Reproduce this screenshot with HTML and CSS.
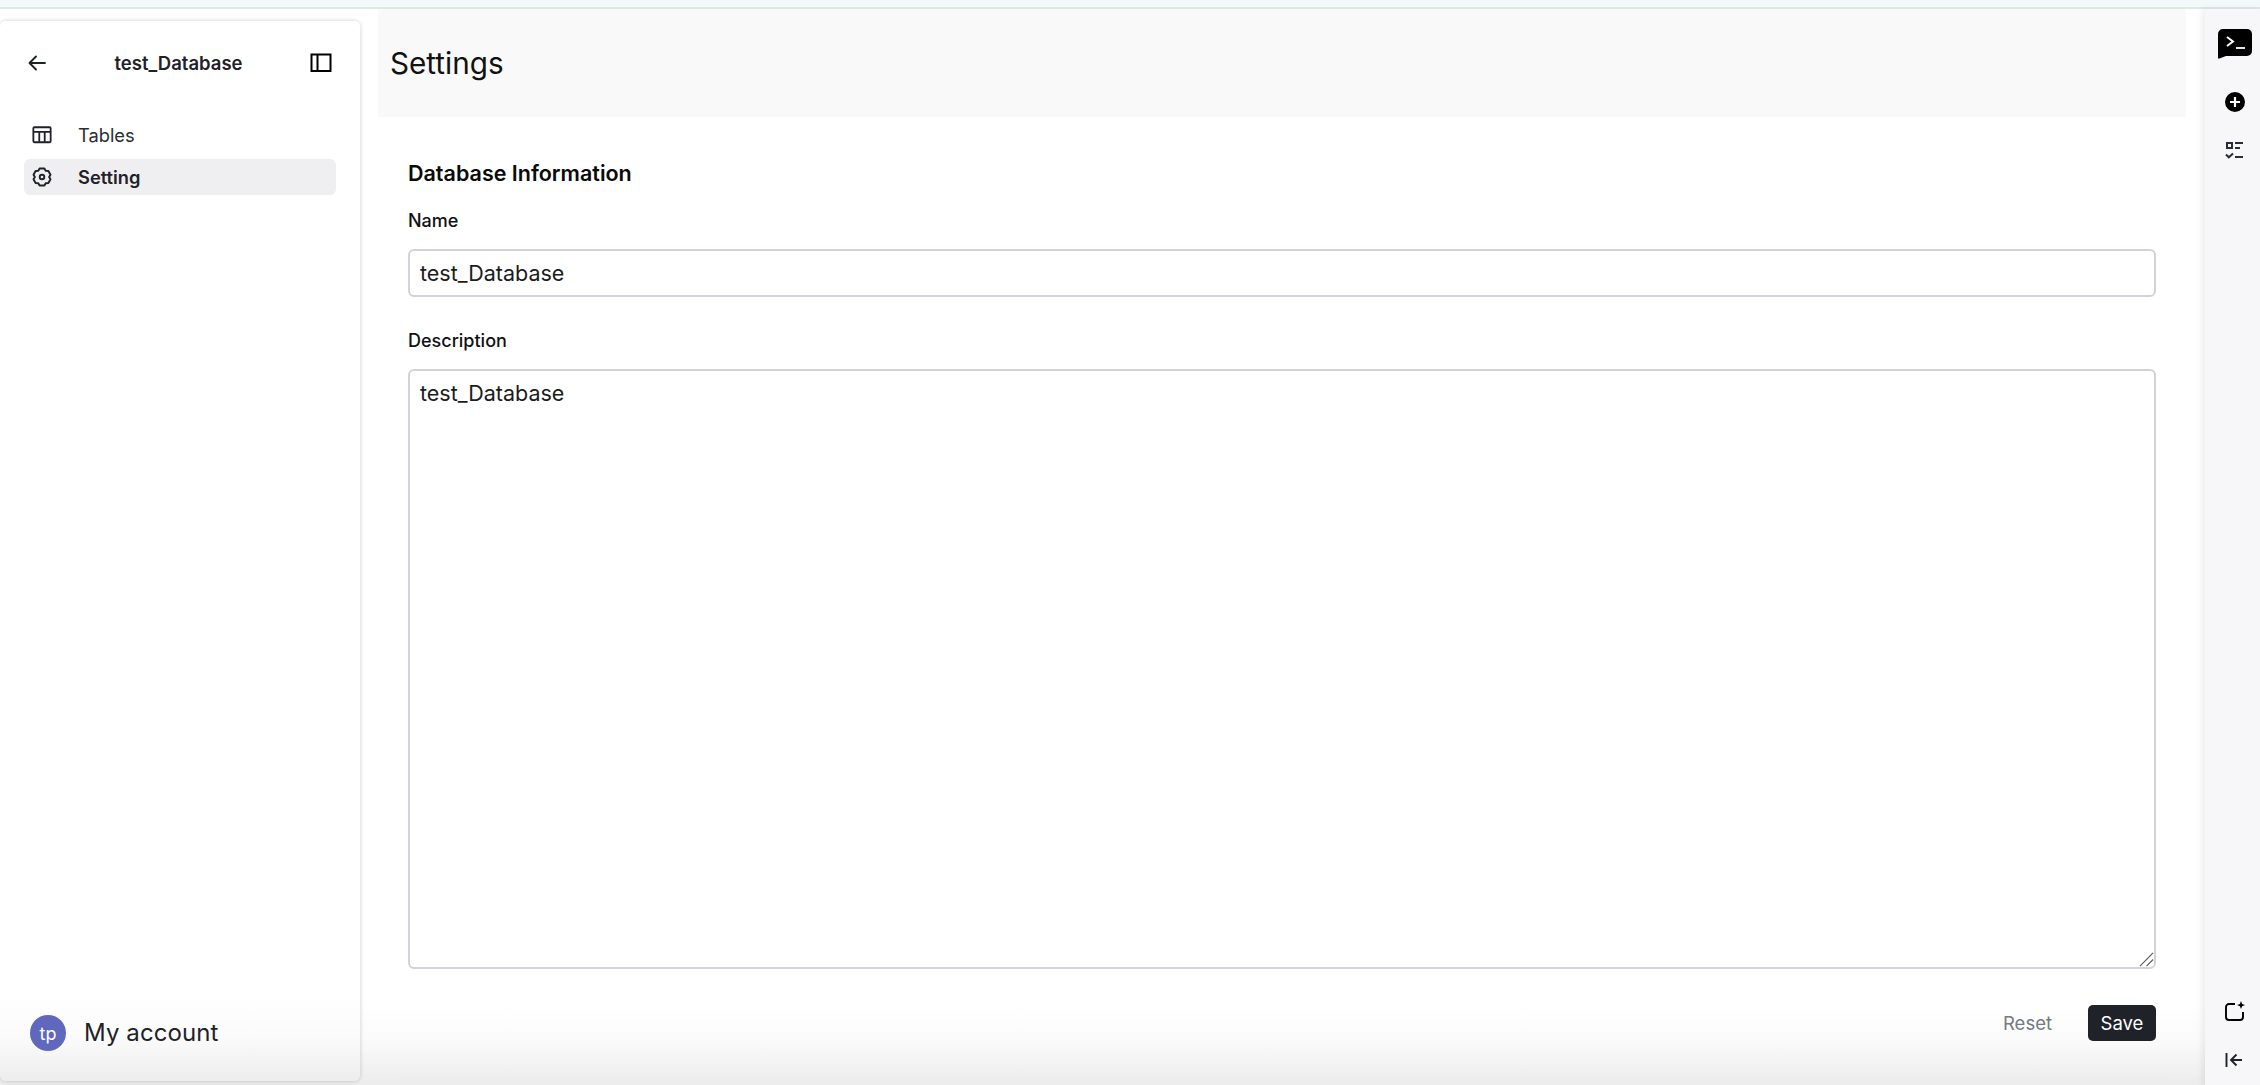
FILE: index.html
```html
<!DOCTYPE html>
<html lang="en">
<head>
<meta charset="utf-8">
<title>Settings</title>
<link rel="stylesheet" href="styles.css">
</head>
<body>
<div class="topstrip"></div>
<div class="app">
  <aside class="sidebar">
    <div class="side-head">
      <svg class="ico back" viewBox="0 0 20 20" fill="none" stroke="#1f2228" stroke-width="1.900" stroke-linecap="round" stroke-linejoin="round"><path d="M18 10H2.500M9 3.500 2.500 10 9 16.500"/></svg>
      <span class="side-title">test_Database</span>
      <svg class="ico panel" viewBox="0 0 22 20" fill="none" stroke="#000" stroke-width="2"><rect x="1.500" y="1.500" width="19" height="16.500"/><path d="M7.500 1.500v16.500"/></svg>
    </div>
    <nav class="nav">
      <div class="nav-item">
        <svg class="ico nav-ico" viewBox="0 0 22 20" fill="none" stroke="#1f2228" stroke-width="2"><rect x="1.500" y="1.500" width="19" height="16.500" rx="1"/><path d="M1.500 6.500h19M8 6.500V18M14 6.500V18"/></svg>
        <span>Tables</span>
      </div>
      <div class="nav-item active">
        <svg class="ico nav-ico" viewBox="0 0 20 20" fill="none" stroke="#1f2228" stroke-width="1.900" stroke-linejoin="round"><path d="M7.600 1.500h4.800l1.300 2.300 2.700.2 2.100 3.800-1.400 2.200 1.400 2.200-2.100 3.800-2.700.2-1.300 2.300H7.600l-1.300-2.300-2.700-.2-2.100-3.800L2.900 10 1.500 7.800l2.100-3.800 2.700-.2z"/><circle cx="10" cy="10" r="2.300"/></svg>
        <span>Setting</span>
      </div>
    </nav>
    <div class="account">
      <span class="avatar">tp</span>
      <span class="account-name">My account</span>
    </div>
  </aside>
  <main class="main">
    <header class="page-head"><h1>Settings</h1></header>
    <form class="form">
      <h2>Database Information</h2>
      <label class="lbl" for="dbname">Name</label>
      <input class="field" id="dbname" value="test_Database">
      <label class="lbl lbl-desc" for="dbdesc">Description</label>
      <div class="area-wrap">
        <textarea class="field area" id="dbdesc">test_Database</textarea>
        <svg class="grip" viewBox="0 0 16 16" fill="none" stroke="#55585f" stroke-width="1.200"><path d="M1 15 15 1M8 15l7-7"/></svg>
      </div>
      <div class="actions">
        <button type="button" class="btn reset">Reset</button>
        <button type="button" class="btn save">Save</button>
      </div>
    </form>
  </main>
  <aside class="rail">
    <svg class="rail-term" viewBox="0 0 36 32"><path fill="#000" d="M6 1h24a5 5 0 0 1 5 5v17a5 5 0 0 1-5 5H9l-6.500 2.600c-1 .4-1.500-.1-1.500-1V6a5 5 0 0 1 5-5z"/><path fill="none" stroke="#fff" stroke-width="2" d="M10 9l6 4.500-6 4.500"/><path fill="none" stroke="#e5e5e5" stroke-width="2" d="M19 20h9"/></svg>
    <svg class="rail-plus" viewBox="0 0 20 20"><circle cx="10" cy="10" r="10" fill="#000"/><path stroke="#fff" stroke-width="2.200" d="M5 10h10M10 5v10"/></svg>
    <svg class="rail-list" viewBox="0 0 20 20" fill="none" stroke="#2a2d34" stroke-width="2"><rect x="2" y="2" width="5" height="5"/><path d="M10 2h8M10 7h5M10 16h8M1 13.500l2.800 2.800L8 12.500"/></svg>
    <div class="rail-spacer"></div>
    <svg class="rail-new" viewBox="0 0 22 22" fill="none"><path stroke="#000" stroke-width="1.900" d="M11 3H5a3 3 0 0 0-3 3v10a3 3 0 0 0 3 3h11a3 3 0 0 0 3-3v-5"/><path fill="#000" d="M17 0l1.100 3 2.900 1.100-2.900 1.100L17 8l-1.100-2.800L13 4.100 15.900 3z"/></svg>
    <svg class="rail-collapse" viewBox="0 0 18 16" fill="none" stroke="#1f2228" stroke-width="1.900"><path d="M1.500 1v14M17 8H6M11.500 2.500 6 8l5.500 5.500"/></svg>
  </aside>
</div>
<div class="hscroll"></div>
</body>
</html>
```

FILE: styles.css
```css
* { box-sizing: border-box; }
html, body { height: 100%; }
body {
  margin: 0;
  height: 1085px;
  overflow: hidden;
  background: #fff;
  font-family: Inter, "Noto Sans", sans-serif;
  color: #1f2228;
  display: flex;
  flex-direction: column;
  position: relative;
}
.topstrip {
  height: 9px;
  flex: none;
  background: #f3f8f8;
  border-bottom: 2px solid #dfe8e8;
}
.app {
  flex: 1;
  display: flex;
  min-height: 0;
  background: linear-gradient(to bottom, #fff 990px, #fbfbfb 1030px, #ececec 100%);
}

.sidebar {
  width: 360px;
  flex: none;
  margin: 12px 0 4px;
  background: linear-gradient(to bottom, #fff 975px, #fbfbfb 1015px, #ededed 100%);
  border-radius: 6px;
  box-shadow: 0 0 4px rgba(30, 30, 50, .22);
  padding: 0 24px;
  display: flex;
  flex-direction: column;
  position: relative;
  z-index: 3;
}
.ico { display: block; flex: none; }
.side-head {
  height: 84px;
  display: flex;
  align-items: center;
  justify-content: space-between;
  padding: 0 4px 0 3px;
}
.back { width: 20px; height: 20px; }
.panel { width: 22px; height: 20px; }
.side-title { font-size: 18.500px; font-weight: 600; line-height: 22px; }
.nav { margin-top: 12px; display: flex; flex-direction: column; gap: 6px; }
.nav-item {
  height: 36px;
  display: flex;
  align-items: center;
  gap: 26px;
  padding: 0 8px;
  font-size: 18.300px;
  border-radius: 6px;
  color: #2a2d34;
}
.nav-ico { width: 20px; height: 20px; }
.active { background: #efeff1; font-weight: 600; color: #1f2228; }
.account {
  margin-top: auto;
  height: 36px;
  margin-bottom: 30px;
  display: flex;
  align-items: center;
  gap: 18px;
  padding-left: 6px;
}
.avatar {
  width: 36px;
  height: 36px;
  border-radius: 50%;
  background: #5f68bd;
  color: #fff;
  font-size: 18px;
  display: flex;
  align-items: center;
  justify-content: center;
}
.account-name { font-size: 24px; line-height: 30px; letter-spacing: .1px; color: #1f2228; }

.main { flex: 1; min-width: 0; padding: 0 19px 0 18px; display: flex; flex-direction: column; }
.page-head {
  height: 108px;
  flex: none;
  background: #f9f9f9;
  padding-left: 12px;
  display: flex;
  align-items: center;
}
h1 { margin: 0; font-size: 29.700px; font-weight: 400; color: #111; line-height: 36px; }
.form { padding: 43px 30px 0 30px; display: flex; flex-direction: column; }
h2 { margin: 0; font-size: 21.500px; font-weight: 600; line-height: 26px; color: #0a0a0a; }
.lbl { font-size: 18px; line-height: 22px; font-weight: 500; color: #111; margin-top: 24px; }
.lbl-desc { margin-top: 33px; }
.field {
  display: block;
  width: 100%;
  height: 48px;
  margin-top: 17px;
  padding: 0 10px;
  border: 2px solid #d2d2dc;
  border-radius: 6px;
  font: 400 21.500px/26px Inter, "Noto Sans", sans-serif;
  color: #1a1c20;
  background: #fff;
  outline: none;
}
.area-wrap { position: relative; }
.area { height: 600px; padding: 9px 10px; resize: none; }
.grip { position: absolute; right: 2px; bottom: 2px; width: 15px; height: 15px; pointer-events: none; }
.actions { margin-top: 36px; display: flex; justify-content: flex-end; align-items: center; gap: 36px; }
.btn {
  height: 36px;
  border: 0;
  border-radius: 5px;
  font: 400 18.500px/22px Inter, "Noto Sans", sans-serif;
  padding: 0 12px;
  background: transparent;
  cursor: pointer;
}
.reset { color: #757980; padding: 0; }
.save { background: #1f2228; color: #fff; width: 68px; padding: 0; }

.rail {
  width: 55px;
  flex: none;
  background: #f7f7fa;
  box-shadow: -3px 0 6px rgba(30, 30, 50, .08);
  display: flex;
  flex-direction: column;
  align-items: center;
  padding-top: 19px;
  position: relative;
  z-index: 3;
}
.rail-term { width: 36px; height: 32px; display: block; margin-left: 4px; }
.rail-plus { width: 20px; height: 20px; display: block; margin-top: 32px; margin-left: 4px; }
.rail-list { width: 20px; height: 20px; display: block; margin-top: 29px; margin-left: 4px; }
.rail-spacer { flex: 1; }
.rail-new { width: 22px; height: 22px; display: block; margin-left: 4px; }
.rail-collapse { width: 18px; height: 16px; display: block; margin: 29px 0 17px 3px; }

.hscroll {
  position: absolute;
  left: 390px;
  width: 1783px;
  bottom: 0;
  height: 8px;
  background: #ededed;
  border-radius: 6px 6px 0 0;
  z-index: 5;
}
```
